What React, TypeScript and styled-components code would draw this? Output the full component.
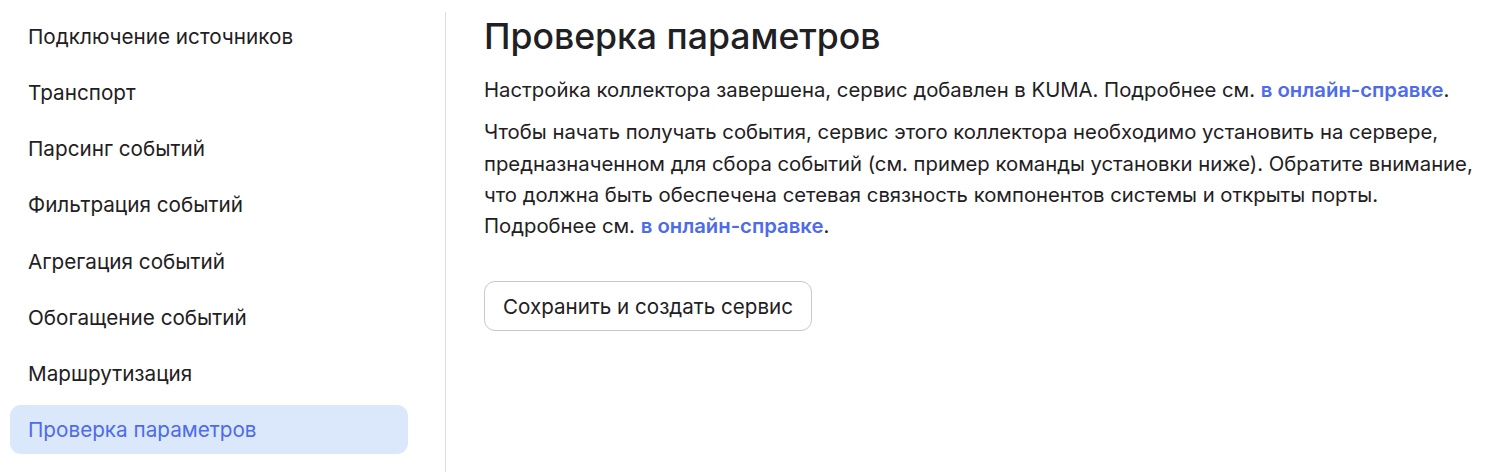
import React from 'react';
import styled, { createGlobalStyle } from 'styled-components';

const GlobalStyle = createGlobalStyle`
  html, body {
    margin: 0;
    padding: 0;
    background: #ffffff;
  }
  body {
    font-family: Inter, "Noto Sans", "Liberation Sans", sans-serif;
    color: #1f2023;
  }
`;

const steps = [
  'Подключение источников',
  'Транспорт',
  'Парсинг событий',
  'Фильтрация событий',
  'Агрегация событий',
  'Обогащение событий',
  'Маршрутизация',
  'Проверка параметров',
];

const Layout = styled.div`
  display: flex;
  height: 472px;
  padding-top: 12px;
  box-sizing: border-box;
`;

const Sidebar = styled.nav`
  width: 446px;
  flex-shrink: 0;
  box-sizing: border-box;
  padding: 0 37px 0 10px;
  border-right: 1px solid #dcdde0;
  display: flex;
  flex-direction: column;
  gap: 7.15px;
`;

const StepItem = styled.div<{ $active?: boolean }>`
  height: 49px;
  display: flex;
  align-items: center;
  padding-left: 18px;
  border-radius: 11px;
  font-size: 20.7px;
  color: ${(p) => (p.$active ? '#4d6bea' : '#1f2023')};
  background: ${(p) => (p.$active ? '#dbe8fb' : 'transparent')};
  cursor: pointer;
`;

const Main = styled.main`
  flex: 1;
  padding: 0 10px 0 38px;
`;

const Title = styled.h1`
  margin: 0;
  height: 49px;
  display: flex;
  align-items: center;
  font-size: 35.6px;
  font-weight: 500;
  color: #1f2023;
`;

const Text = styled.p<{ $gap?: number }>`
  margin: ${(p) => p.$gap ?? 12}px 0 0;
  font-size: 20.3px;
  line-height: 31.3px;
  max-width: 992px;
`;

const Link = styled.a`
  color: #4d6bea;
  font-weight: 600;
  text-decoration: none;
`;

const Button = styled.button`
  margin-top: 40px;
  height: 50px;
  padding: 0 18px;
  border: 1.5px solid #c4c8d0;
  border-radius: 11px;
  background: #ffffff;
  font-family: inherit;
  font-size: 20.6px;
  color: #1f2023;
  cursor: pointer;
`;

const App: React.FC = () => {
  const active = steps[steps.length - 1];
  return (
    <>
      <GlobalStyle />
      <Layout>
        <Sidebar>
          {steps.map((step) => (
            <StepItem key={step} $active={step === active}>
              {step}
            </StepItem>
          ))}
        </Sidebar>
        <Main>
          <Title>Проверка параметров</Title>
          <Text $gap={13}>
            Настройка коллектора завершена, сервис добавлен в KUMA. Подробнее см.{' '}
            <Link href="#">в онлайн-справке</Link>.
          </Text>
          <Text $gap={11}>
            Чтобы начать получать события, сервис этого коллектора необходимо установить на сервере,
            предназначенном для сбора событий (см. пример команды установки ниже). Обратите внимание,
            что должна быть обеспечена сетевая связность компонентов системы и открыты порты.
            Подробнее см. <Link href="#">в онлайн-справке</Link>.
          </Text>
          <Button>Сохранить и создать сервис</Button>
        </Main>
      </Layout>
    </>
  );
};

export default App;
